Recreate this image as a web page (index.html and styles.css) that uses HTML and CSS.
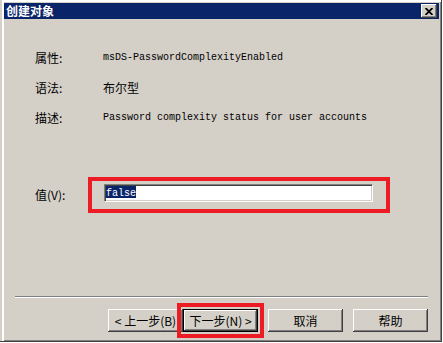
FILE: index.html
```html
<!DOCTYPE html>
<html>
<head>
  <meta charset="utf-8" />
  <title>创建对象</title>
  <link rel="stylesheet" href="styles.css">
</head>
<body>
<div class="window">
  <div class="titlebar">
    <span class="title">创建对象</span>
    <button class="close" type="button">
      <svg width="8" height="7" viewBox="0 0 8 7"><path d="M0.5 0 L7.5 7 M7.5 0 L0.5 7" stroke="#000" stroke-width="1.8" fill="none"/></svg>
    </button>
  </div>
  <div class="content">
    <div class="props">
      <div class="label">属性:</div>
      <div class="value mono">msDS-PasswordComplexityEnabled</div>
      <div class="label">语法:</div>
      <div class="value">布尔型</div>
      <div class="label">描述:</div>
      <div class="value mono">Password complexity status for user accounts</div>
    </div>
    <div class="valueRow">
      <label class="valueLabel" for="attrValue">值(V):</label>
      <div class="mark">
        <div class="field" id="attrValue"><span class="sel">false</span></div>
      </div>
    </div>
    <div class="footer">
      <div class="separator"></div>
      <div class="buttons">
        <button class="btn" type="button">&lt; 上一步(B)</button>
        <button class="btn default" type="button">下一步(N) &gt;</button>
        <button class="btn spaced" type="button">取消</button>
        <button class="btn spaced" type="button">帮助</button>
      </div>
    </div>
  </div>
</div>
</body>
</html>
```

FILE: styles.css
```css
* { margin: 0; padding: 0; box-sizing: border-box; }
body { background: #fff; font-family: "Noto Sans CJK SC", "Liberation Sans", sans-serif; font-size: 12px; color: #000; }
.window { width: 442px; height: 342px; display: flex; flex-direction: column; background: #d4d0c8; padding: 3px 2px 1px 4px; border-right: 1px solid #404040; border-bottom: 1px solid #404040; box-shadow: inset 2px 0 #d4d0c8, inset 4px 0 #fff, inset 0 2px #fff, inset -1px -1px #808080; }
.titlebar { height: 16px; background: #0a246a; display: flex; align-items: center; justify-content: space-between; padding: 0 2px 0 2px; }
.title { color: #fff; font-weight: bold; font-size: 12px; line-height: 16px; }
.close { width: 16px; height: 14px; background: #d4d0c8; border: none; display: flex; align-items: center; justify-content: center; box-shadow: inset -1px -1px #404040, inset 1px 1px #fff, inset -2px -2px #808080; }
.close svg { display: block; }
.content { flex: 1; display: flex; flex-direction: column; }
.props { display: grid; grid-template-columns: 68px 1fr; row-gap: 14px; padding: 31px 0 0 31px; line-height: 16px; }
.label, .value { height: 16px; }
.mono { font-family: "Liberation Mono", monospace; font-size: 10px; }
.valueRow { display: flex; align-items: center; margin-top: 51px; padding-left: 31px; }
.valueLabel { width: 53px; line-height: 16px; }
.mark { border: 4px solid #ed1c24; padding: 3px 13px 7px 12px; }
.field { width: 269px; height: 18px; background: #fff; border: 1px solid; border-color: #808080 #fff #fff #808080; box-shadow: inset 1px 1px #404040, inset -1px -1px #d4d0c8; padding: 1px 0 0 1px; font-family: "Liberation Mono", monospace; font-size: 10px; line-height: 12px; }
.sel { background: #0a246a; color: #fff; display: inline-block; padding-top: 2px; height: 12px; line-height: 11px; }
.footer { margin-top: auto; padding-bottom: 8px; }
.separator { margin: 0 11px; height: 2px; border-top: 1px solid #808080; border-bottom: 1px solid #fff; }
.buttons { display: flex; justify-content: flex-end; margin-top: 11px; padding-right: 11px; }
.btn { width: 75px; height: 23px; background: #d4d0c8; border: none; font-family: "Noto Sans CJK SC", "Liberation Sans", sans-serif; font-size: 12px; line-height: 16px; color: #000; box-shadow: inset -1px -1px #404040, inset 1px 1px #fff, inset -2px -2px #808080; }
.btn.default { border: 1px solid #000; outline: 4px solid #ed1c24; outline-offset: 2px; }
.btn.spaced { margin-left: 10px; }
```
